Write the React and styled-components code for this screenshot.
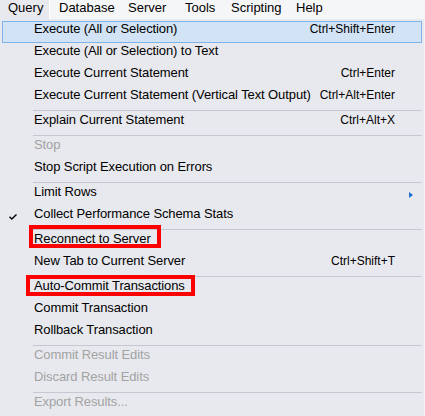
import React from 'react';
import styled, { createGlobalStyle } from 'styled-components';

const GlobalStyle = createGlobalStyle`
  html, body {
    margin: 0;
    padding: 0;
    background: #e8e9ee;
    font-family: 'Liberation Sans', Arial, sans-serif;
    font-size: 13px;
    color: #000;
  }
`;

const menuTitles = [
  { label: 'Query', width: 50, open: true },
  { label: 'Database', width: 69 },
  { label: 'Server', width: 57 },
  { label: 'Tools', width: 46 },
  { label: 'Scripting', width: 65 },
  { label: 'Help', width: 60 },
];

const items = [
  { label: 'Execute (All or Selection)', shortcut: 'Ctrl+Shift+Enter', active: true },
  { label: 'Execute (All or Selection) to Text' },
  { label: 'Execute Current Statement', shortcut: 'Ctrl+Enter' },
  { label: 'Execute Current Statement (Vertical Text Output)', shortcut: 'Ctrl+Alt+Enter' },
  { sep: true },
  { label: 'Explain Current Statement', shortcut: 'Ctrl+Alt+X' },
  { sep: true },
  { label: 'Stop', disabled: true },
  { label: 'Stop Script Execution on Errors' },
  { sep: true },
  { label: 'Limit Rows', submenu: true },
  { label: 'Collect Performance Schema Stats', checked: true },
  { sep: true },
  { label: 'Reconnect to Server', mark: { left: 26, top: -7, width: 132, height: 23 } },
  { label: 'New Tab to Current Server', shortcut: 'Ctrl+Shift+T' },
  { sep: true },
  { label: 'Auto-Commit Transactions', mark: { left: 23, top: -4, width: 169, height: 21 } },
  { label: 'Commit Transaction' },
  { label: 'Rollback Transaction' },
  { sep: true },
  { label: 'Commit Result Edits', disabled: true },
  { label: 'Discard Result Edits', disabled: true },
  { sep: true },
  { label: 'Export Results...', disabled: true },
];

const CheckIcon = () => (
  <svg width="8" height="6" viewBox="0 0 8 6">
    <path d="M0.5 2.8 L2.8 5 L7.5 0.5" fill="none" stroke="#000" strokeWidth="1.4" />
  </svg>
);

const App = () => (
  <Page>
    <GlobalStyle />
    <MenuBar>
      {menuTitles.map((m) => (
        <MenuTitle key={m.label} $open={m.open} $width={m.width}>
          {m.label}
        </MenuTitle>
      ))}
    </MenuBar>
    <Dropdown>
      {items.map((it, i) =>
        it.sep ? (
          <Separator key={i} />
        ) : (
          <Item key={i} $active={it.active} $disabled={it.disabled}>
            <Gutter>{it.checked && <CheckIcon />}</Gutter>
            <Label>{it.label}</Label>
            {it.shortcut && <Shortcut>{it.shortcut}</Shortcut>}
            {it.submenu && <Arrow />}
            {it.mark && (
              <Marker
                $left={it.mark.left}
                $top={it.mark.top}
                $width={it.mark.width}
                $height={it.mark.height}
              />
            )}
          </Item>
        )
      )}
    </Dropdown>
  </Page>
);

const Page = styled.div`
  width: 425px;
  height: 416px;
  overflow: hidden;
  background: #e8e9ee;
`;

const MenuBar = styled.div`
  display: flex;
  height: 19px;
  background: #f5f6f8;
`;

const MenuTitle = styled.div`
  box-sizing: border-box;
  width: ${(p) => p.$width}px;
  height: 19px;
  padding-left: ${(p) => (p.$open ? 8 : 9)}px;
  line-height: 16px;
  white-space: nowrap;
  background: ${(p) => (p.$open ? '#e8e9ee' : 'transparent')};
  border-right: ${(p) => (p.$open ? '1px solid #ffffff' : 'none')};
`;

const Dropdown = styled.div`
  display: flex;
  flex-direction: column;
  padding: 2px 2px 0 2px;
  border-right: 1px solid #f2f3f6;
`;

const Item = styled.div`
  position: relative;
  box-sizing: border-box;
  display: flex;
  align-items: flex-start;
  height: 22px;
  padding-right: 26px;
  line-height: 13px;
  white-space: nowrap;
  color: ${(p) => (p.$disabled ? '#a3a3a3' : '#000')};
  background: ${(p) => (p.$active ? '#d1e3f5' : 'transparent')};
  border: 1px solid ${(p) => (p.$active ? '#80b3ea' : 'transparent')};
`;

const Gutter = styled.div`
  flex-shrink: 0;
  box-sizing: border-box;
  width: 31px;
  height: 20px;
  padding-left: 6px;
  display: flex;
  align-items: center;
`;

const Label = styled.span`
  flex: 1;
  min-width: 0;
  letter-spacing: -0.1px;
`;

const Shortcut = styled.span`
  flex-shrink: 0;
  font-size: 12px;
  padding-top: 1px;
`;

const Arrow = styled.span`
  position: absolute;
  right: 8px;
  top: 7px;
  width: 0;
  height: 0;
  border-top: 3.5px solid transparent;
  border-bottom: 3.5px solid transparent;
  border-left: 4px solid #1c6fc6;
`;

const Separator = styled.div`
  height: 3px;
  margin-left: 31px;
  display: flex;
  align-items: center;
  &::after {
    content: '';
    flex: 1;
    height: 1px;
    background: #c6c8d1;
  }
`;

const Marker = styled.span`
  position: absolute;
  box-sizing: border-box;
  left: ${(p) => p.$left}px;
  top: ${(p) => p.$top}px;
  width: ${(p) => p.$width}px;
  height: ${(p) => p.$height}px;
  border: 4px solid #ff0000;
  pointer-events: none;
`;

export default App;
